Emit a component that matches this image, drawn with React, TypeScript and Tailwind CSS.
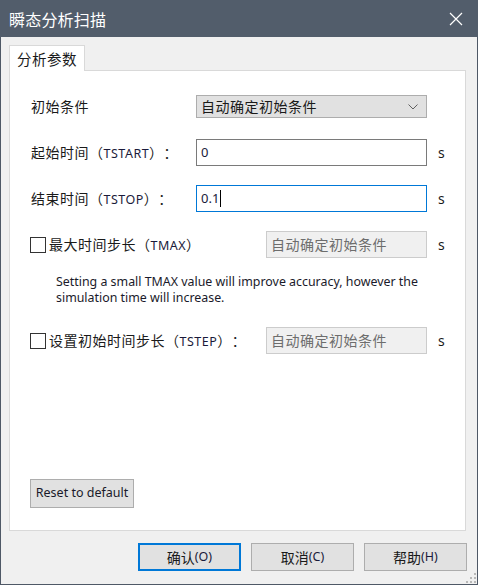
const CJK = "font-['Microsoft_YaHei','Noto_Sans_CJK_SC',sans-serif]";

const Latin = ({ children }: { children: React.ReactNode }) => (
  <span className="font-['Noto_Sans',sans-serif] text-[12.5px] text-[#1a1a3a]">{children}</span>
);

const Checkbox = () => (
  <span className="w-[16px] h-[16px] border border-[#333333] bg-white shrink-0" />
);

const Unit = () => (
  <span className="ml-[11px] text-[14px] font-['Noto_Sans',sans-serif] text-[#1a1a1a]">s</span>
);

export default function App() {
  return (
    <div className={`w-[478px] h-[585px] bg-[#f0f0f0] border border-[#4e5866] flex flex-col ${CJK} text-[#1a1a1a] relative [text-spacing-trim:space-all]`}>
      {/* title bar */}
      <div className="h-[37px] bg-[#525d6b] flex items-center justify-between pl-[9px] pr-[14px] shrink-0 -mx-px -mt-px">
        <span className="text-white text-[16px] tracking-[0.2px]">瞬态分析扫描</span>
        <svg width="14" height="14" viewBox="0 0 14 14" className="mr-[1px]">
          <path d="M1 1 L13 13 M13 1 L1 13" stroke="#ffffff" strokeWidth="1.2" />
        </svg>
      </div>

      {/* tabs */}
      <div className="pl-[8px] pr-[11px] pt-[8px] flex flex-col">
        <div className="flex">
          <div className="w-[76px] h-[26px] bg-white border border-b-0 border-[#d9d9d9] flex items-center justify-center text-[14.5px] tracking-[0.5px] relative z-10 -mb-px">
            分析参数
          </div>
        </div>
        <div className="h-[461px] bg-white border border-[#d9d9d9] flex flex-col pt-[24px] pl-[21px]">
          <div className="flex items-center h-[23px]">
            <span className="w-[165px] text-[14px] tracking-[0.5px]">初始条件</span>
            <div className="w-[231px] h-[23px] bg-[#e1e1e1] border border-[#adadad] flex items-center justify-between pl-[4px] pr-[8px]">
              <span className="text-[14px] tracking-[0.5px]">自动确定初始条件</span>
              <svg width="10" height="6" viewBox="0 0 10 6">
                <path d="M0.5 0.5 L5 5 L9.5 0.5" stroke="#606060" strokeWidth="1" fill="none" />
              </svg>
            </div>
          </div>

          <div className="flex items-center h-[27px] mt-[21px]">
            <span className="w-[165px] text-[14px] tracking-[0.5px]">起始时间（<Latin>TSTART</Latin>）：</span>
            <div className="w-[231px] h-[27px] bg-white border border-[#7a7a7a] flex items-center pl-[4px]">
              <span className="font-['Noto_Sans',sans-serif] text-[13px] text-[#1a1a3a]">0</span>
            </div>
            <Unit />
          </div>

          <div className="flex items-center h-[27px] mt-[19px]">
            <span className="w-[165px] text-[14px] tracking-[0.5px]">结束时间（<Latin>TSTOP</Latin>）：</span>
            <div className="w-[231px] h-[27px] bg-white border border-[#0078d7] flex items-center pl-[4px]">
              <span className="font-['Noto_Sans',sans-serif] text-[13px] text-[#1a1a3a]">0.1</span>
              <span className="w-px h-[17px] bg-black ml-px" />
            </div>
            <Unit />
          </div>

          <div className="flex items-center h-[27px] mt-[19px] -ml-px">
            <div className="w-[236px] flex items-center gap-[3px]">
              <Checkbox />
              <span className="text-[14px] tracking-[0.5px]">最大时间步长（<Latin>TMAX</Latin>）</span>
            </div>
            <div className="w-[161px] h-[27px] bg-[#f0f0f0] border border-[#cccccc] flex items-center pl-[4px]">
              <span className="text-[14px] tracking-[0.5px] text-[#6d6d6d]">自动确定初始条件</span>
            </div>
            <Unit />
          </div>

          <p className="ml-[25px] mt-[16px] w-[380px] text-[12.4px] leading-[16px] font-['Noto_Sans',sans-serif] text-[#1a1a2a]">
            Setting a small TMAX value will improve accuracy, however the simulation time will increase.
          </p>

          <div className="flex items-center h-[27px] mt-[21px] -ml-px">
            <div className="w-[236px] flex items-center gap-[3px]">
              <Checkbox />
              <span className="text-[14px] tracking-[0.5px]">设置初始时间步长（<Latin>TSTEP</Latin>）：</span>
            </div>
            <div className="w-[161px] h-[27px] bg-[#f0f0f0] border border-[#cccccc] flex items-center pl-[4px]">
              <span className="text-[14px] tracking-[0.5px] text-[#6d6d6d]">自动确定初始条件</span>
            </div>
            <Unit />
          </div>

          <div className="mt-auto mb-[22px] -ml-[1px]">
            <button className="w-[104px] h-[29px] bg-[#e1e1e1] border border-[#adadad] font-['Noto_Sans',sans-serif] text-[12.5px] text-[#1a1a2a]">
              Reset to default
            </button>
          </div>
        </div>
      </div>

      {/* dialog buttons */}
      <div className="flex justify-end gap-[10px] pr-[10px] mt-[12px]">
        <button className="w-[103px] h-[28px] bg-[#e1e1e1] border-2 border-[#0078d7] text-[14px] flex items-center justify-center">
          确认<Latin>(O)</Latin>
        </button>
        <button className="w-[103px] h-[28px] bg-[#e1e1e1] border border-[#adadad] text-[14px] flex items-center justify-center">
          取消<Latin>(C)</Latin>
        </button>
        <button className="w-[103px] h-[28px] bg-[#e1e1e1] border border-[#adadad] text-[14px] flex items-center justify-center">
          帮助<Latin>(H)</Latin>
        </button>
      </div>

      {/* resize grip */}
      <svg width="10" height="10" viewBox="0 0 10 10" className="absolute right-[1px] bottom-[1px]">
        <rect x="8" y="0" width="2" height="2" fill="#b8b8b8" />
        <rect x="4" y="4" width="2" height="2" fill="#b8b8b8" />
        <rect x="8" y="4" width="2" height="2" fill="#b8b8b8" />
        <rect x="0" y="8" width="2" height="2" fill="#b8b8b8" />
        <rect x="4" y="8" width="2" height="2" fill="#b8b8b8" />
        <rect x="8" y="8" width="2" height="2" fill="#b8b8b8" />
      </svg>
    </div>
  );
}
